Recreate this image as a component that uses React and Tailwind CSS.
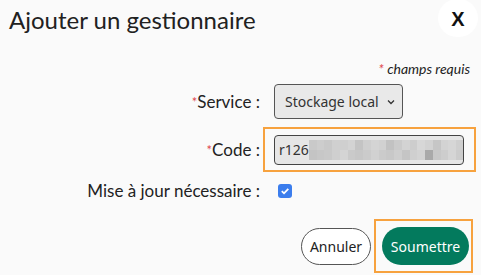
import React from "react";

const row1 = ["#c9c9c9","#cdcdcd","#c9c9c9","#d0d0d0","#cfcfcf","#d3d3d3","#c4c4c4","#cfcfcf","#d4d4d4","#d1d1d1","#c2c2c2","#cbcbcb","#d3d3d3","#cdcdcd","#d7d7d7","#d2d2d2","#c6c6c6","#d3d3d3","#d6d6d6","#cfcfcf"];
const row2 = ["#c4c4c4","#c7c7c7","#c9c9c9","#cfcfcf","#d4d4d4","#cacaca","#c7c7c7","#cbcbcb","#d1d1d1","#cbcbcb","#c8c8c8","#cecece","#c5c5c5","#cfcfcf","#d3d3d3","#a9a9a9","#c8c8c8","#cdcdcd","#d5d5d5","#cccccc"];

function Mosaic() {
  return (
    <div className="flex flex-col">
      <div className="flex">
        {row1.map((c, i) => (
          <div key={i} className="w-[7.75px] h-[10px]" style={{ backgroundColor: c }} />
        ))}
      </div>
      <div className="flex">
        {row2.map((c, i) => (
          <div key={i} className="w-[7.75px] h-[10px]" style={{ backgroundColor: c }} />
        ))}
      </div>
    </div>
  );
}

export default function App() {
  return (
    <div className="w-[481px] h-[275px] bg-[#fafafa] overflow-hidden text-[#222] font-['Lato',sans-serif]">
      <div className="flex justify-between items-start pl-[9px] pr-[3px]">
        <h1 className="text-[24px] leading-[28px] mt-[6px] text-[#212121]">Ajouter un gestionnaire</h1>
        <div className="w-[40px] h-[38px] rounded-full bg-white flex items-center justify-center mt-[-1px]">
          <span className="text-[20px] font-bold leading-none text-[#111] font-['Liberation_Sans',sans-serif] mt-[2px]">X</span>
        </div>
      </div>
      <div className="text-right pr-[11px] mt-[24px] text-[14px] leading-[16px] italic text-[#222]">
        <span className="text-[#e0474c]">*</span> champs requis
      </div>
      <div className="grid grid-cols-[260px_1fr] gap-x-[14px] items-center mt-[7px]">
        <div className="text-right text-[17px] leading-[20px]">
          <span className="text-[#e0474c] text-[13px] align-top">*</span>Service :
        </div>
        <div>
          <div className="w-[129px] h-[35px] border border-[#555] rounded-[4px] bg-[#e9e9e9] flex items-center justify-between pl-[10px] pr-[6px] font-['Noto_Sans',sans-serif] text-[14px] text-[#333]">
            <span>Stockage local</span>
            <svg width="10" height="10" viewBox="0 0 10 10"><path d="M2 3.5 L5 6.5 L8 3.5" fill="none" stroke="#333" strokeWidth="1.3" /></svg>
          </div>
        </div>
        <div className="text-right text-[17px] leading-[20px] mt-[8px]">
          <span className="text-[#e0474c] text-[13px] align-top">*</span>Code :
        </div>
        <div className="mt-[8px] ml-[-11px]">
          <div className="w-[213px] h-[45px] border-2 border-[#f7a23e] flex items-center pl-[9px]">
            <div className="w-[190px] h-[30px] border border-[#444] rounded-[4px] bg-[#e6e6e6] flex items-center pl-[4px] font-['Noto_Sans',sans-serif] text-[14px] text-[#333] overflow-hidden">
              <span>r126</span>
              <Mosaic />
            </div>
          </div>
        </div>
        <div className="text-right text-[17px] leading-[20px] mt-[9px]">Mise à jour nécessaire :</div>
        <div className="mt-[9px] pl-[4px] flex items-center">
          <div className="w-[14px] h-[14px] rounded-[3px] bg-[#3b7ded] flex items-center justify-center">
            <svg width="10" height="10" viewBox="0 0 10 10"><path d="M1.8 5.2 L4 7.3 L8.3 2.8" fill="none" stroke="white" strokeWidth="1.8" /></svg>
          </div>
        </div>
      </div>
      <div className="flex justify-end items-center mt-[18px] pr-[8px] gap-[3px]">
        <button className="h-[37px] w-[70px] rounded-full border border-[#555] bg-white text-[14px] text-[#222] font-['Noto_Sans',sans-serif]">Annuler</button>
        <div className="border-2 border-[#f7a23e] py-[6px] pl-[6px] pr-[2px]">
          <button className="h-[38px] w-[87px] rounded-full bg-[#037a5d] text-white text-[14px] font-['Noto_Sans',sans-serif]">Soumettre</button>
        </div>
      </div>
    </div>
  );
}
